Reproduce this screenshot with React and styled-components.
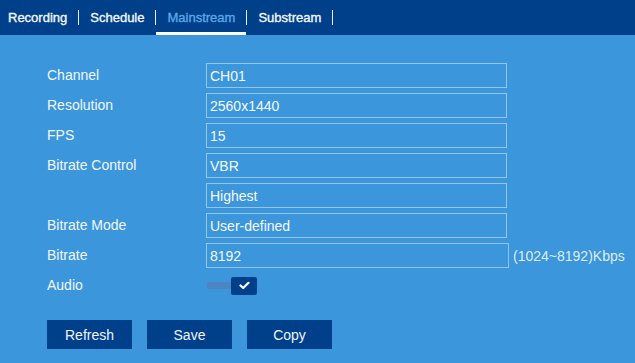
import React from "react";
import styled, { createGlobalStyle } from "styled-components";

const Global = createGlobalStyle`
  html, body { margin: 0; padding: 0; }
  body {
    background: #3b96dc;
    font-family: "Liberation Sans", Arial, sans-serif;
    width: 635px;
    height: 363px;
    overflow: hidden;
  }
`;

const Page = styled.div`
  width: 635px;
  height: 363px;
  background: #3b96dc;
  color: #f2f7fc;
`;

const TabBar = styled.div`
  height: 35px;
  background: #00408a;
  display: flex;
  align-items: stretch;
`;

const Tab = styled.div`
  display: flex;
  align-items: center;
  padding: 3px 11px 0 ${(p) => (p.$first ? "8px" : "11px")};
  font-size: 13px;
  font-weight: normal;
  -webkit-text-stroke: 0.35px ${(p) => (p.$active ? "#5aa8e6" : "#f4f8fc")};
  color: ${(p) => (p.$active ? "#5aa8e6" : "#f4f8fc")};
  box-sizing: border-box;
  border-bottom: 3px solid ${(p) => (p.$active ? "#ffffff" : "transparent")};
`;

const Divider = styled.div`
  width: 1px;
  height: 15px;
  background: #e8f0f8;
  align-self: flex-start;
  margin-top: 10px;
`;

const Form = styled.div`
  padding: 28px 0 0 47px;
  display: grid;
  grid-template-columns: 159px auto;
  grid-auto-rows: 25px;
  row-gap: 5px;
  align-items: center;
`;

const Label = styled.div`
  font-size: 14px;
  color: #f2f7fc;
  margin-top: -1px;
`;

const FieldWrap = styled.div`
  display: flex;
  align-items: center;
  gap: 4px;
`;

const Field = styled.div`
  box-sizing: border-box;
  width: ${(p) => p.$w || 301}px;
  height: 25px;
  border: 1px solid #92c6f0;
  padding-left: 3px;
  display: flex;
  align-items: center;
  font-size: 14px;
  color: #f6f9fd;
`;

const Unit = styled.span`
  font-size: 14px;
  color: #dfecf8;
`;

const Toggle = styled.div`
  display: flex;
  align-items: center;
  padding-left: 1px;
`;

const Track = styled.div`
  width: 25px;
  height: 7px;
  background: #4d84c2;
`;

const Knob = styled.div`
  width: 26px;
  height: 18px;
  margin-left: -1px;
  background: #003f8a;
  border-radius: 2px;
  display: flex;
  align-items: center;
  justify-content: center;
`;

const Buttons = styled.div`
  display: flex;
  gap: 15px;
  padding: 22px 0 0 47px;
`;

const Button = styled.button`
  width: 85px;
  height: 29px;
  border: none;
  background: #00408a;
  color: #eef4fb;
  font-family: "Liberation Sans", Arial, sans-serif;
  font-size: 14px;
  padding: 0;
  cursor: pointer;
`;

const rows = [
  ["Channel", "CH01"],
  ["Resolution", "2560x1440"],
  ["FPS", "15"],
  ["Bitrate Control", "VBR"],
  ["", "Highest"],
  ["Bitrate Mode", "User-defined"],
];

export default function App() {
  return (
    <Page>
      <Global />
      <TabBar>
        <Tab $first>Recording</Tab>
        <Divider />
        <Tab>Schedule</Tab>
        <Divider />
        <Tab $active>Mainstream</Tab>
        <Divider />
        <Tab>Substream</Tab>
        <Divider />
      </TabBar>
      <Form>
        {rows.map(([l, v], i) => (
          <React.Fragment key={i}>
            <Label>{l}</Label>
            <Field>{v}</Field>
          </React.Fragment>
        ))}
        <Label>Bitrate</Label>
        <FieldWrap>
          <Field $w={303}>8192</Field>
          <Unit>(1024~8192)Kbps</Unit>
        </FieldWrap>
        <Label>Audio</Label>
        <Toggle>
          <Track />
          <Knob>
            <svg width="11" height="9" viewBox="0 0 11 9">
              <path d="M1.5 4.5 L4.2 7 L9.5 1.8" fill="none" stroke="#ffffff" strokeWidth="2.2" strokeLinecap="round" strokeLinejoin="round" />
            </svg>
          </Knob>
        </Toggle>
      </Form>
      <Buttons>
        <Button>Refresh</Button>
        <Button>Save</Button>
        <Button>Copy</Button>
      </Buttons>
    </Page>
  );
}
